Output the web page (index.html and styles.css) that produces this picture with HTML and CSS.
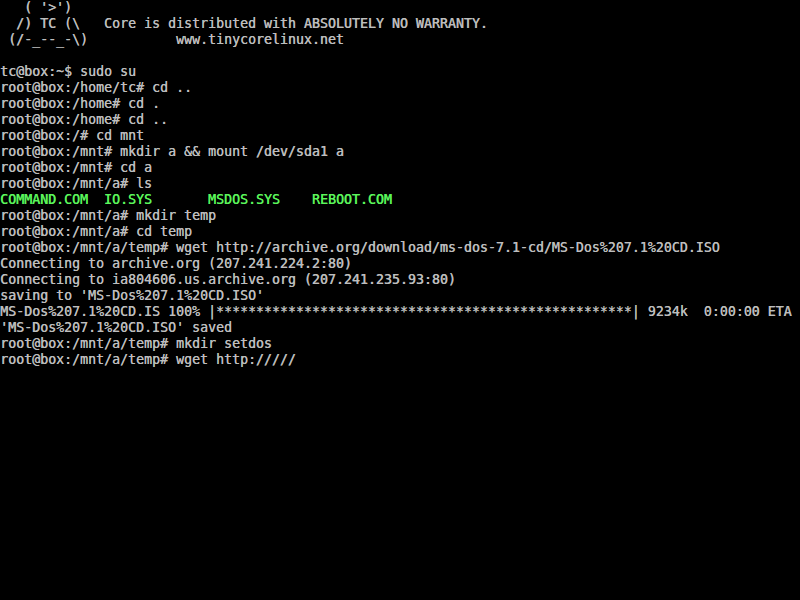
FILE: index.html
```
<!DOCTYPE html>
<html lang="en">
<head>
<meta charset="utf-8">
<title>tty</title>
<link rel="stylesheet" href="styles.css">
</head>
<body>
<pre class="term">   ( '>')
  /) TC (\   Core is distributed with ABSOLUTELY NO WARRANTY.
 (/-_--_-\)           www.tinycorelinux.net

tc@box:~$ sudo su
root@box:/home/tc# cd ..
root@box:/home# cd .
root@box:/home# cd ..
root@box:/# cd mnt
root@box:/mnt# mkdir a &amp;&amp; mount /dev/sda1 a
root@box:/mnt# cd a
root@box:/mnt/a# ls
<span class="exe">COMMAND.COM</span>  <span class="exe">IO.SYS</span>       <span class="exe">MSDOS.SYS</span>    <span class="exe">REBOOT.COM</span>
root@box:/mnt/a# mkdir temp
root@box:/mnt/a# cd temp
root@box:/mnt/a/temp# wget http://archive.org/download/ms-dos-7.1-cd/MS-Dos%207.1%20CD.ISO
Connecting to archive.org (207.241.224.2:80)
Connecting to ia804606.us.archive.org (207.241.235.93:80)
saving to 'MS-Dos%207.1%20CD.ISO'
MS-Dos%207.1%20CD.IS 100% |****************************************************| 9234k  0:00:00 ETA
'MS-Dos%207.1%20CD.ISO' saved
root@box:/mnt/a/temp# mkdir setdos
root@box:/mnt/a/temp# wget http://///</pre>
</body>
</html>
```
FILE: styles.css
```
html, body {
  margin: 0;
  padding: 0;
  background: #000;
  width: 800px;
  height: 600px;
  overflow: hidden;
}
.term {
  margin: 0;
  padding: 0;
  font-family: "DejaVu Sans Mono", "Liberation Mono", monospace;
  font-size: 13.29px;
  line-height: 16px;
  color: #bdbdbd;
  white-space: pre;
  text-shadow: 0.4px 0 0 #bdbdbd;
}
.exe {
  color: #5cf55c;
  text-shadow: 0.4px 0 0 #5cf55c;
}
```
